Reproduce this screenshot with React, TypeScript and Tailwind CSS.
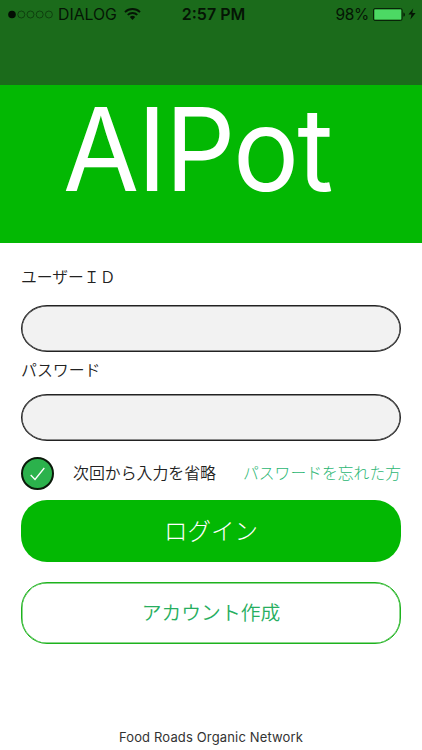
import { useState } from "react";

const SignalDots = () => {
  return (
    <svg width="46" height="9" viewBox="0 0 46 9" fill="none">
      <circle cx="4" cy="4.5" r="3.8" fill="#030d03" />
      {[13.3, 22.5, 31.7, 40.9].map((cx) => (
        <circle key={cx} cx={cx} cy="4.5" r="3.5" stroke="#0b350b" strokeWidth="0.8" />
      ))}
    </svg>
  );
};

const WifiIcon = () => {
  return (
    <svg width="17" height="12" viewBox="0 0 17 12" fill="none">
      <path d="M1 4.1A10.8 10.8 0 0 1 16 4.1" stroke="#051505" strokeWidth="1.9" />
      <path d="M3.7 6.9A6.9 6.9 0 0 1 13.3 6.9" stroke="#051505" strokeWidth="1.9" />
      <path d="M5.8 9.1A3.9 3.9 0 0 1 11.2 9.1L8.5 12Z" fill="#051505" />
    </svg>
  );
};

const BatteryIcon = () => {
  return (
    <svg width="33" height="13" viewBox="0 0 33 13" fill="none">
      <rect x="0.5" y="0.5" width="28.6" height="12" rx="1.6" stroke="#082308" />
      <rect x="1.4" y="1.4" width="26.8" height="10.2" rx="0.6" fill="#4cd964" />
      <path d="M30.3 4.4C32.6 4.9 32.6 8.1 30.3 8.6Z" fill="#082308" />
    </svg>
  );
};

const ChargingIcon = () => {
  return (
    <svg width="8" height="12" viewBox="0 0 8 12">
      <path d="M5.2 0.4L0.4 6.6H3.5L2.4 11.6L7.6 5.1H4.3Z" fill="#051505" />
    </svg>
  );
};

const StatusBar = () => {
  return (
    <div className="grid h-7 grid-cols-[1fr_auto_1fr] items-center pr-1.5 pl-2 text-[#051505]">
      <div className="flex items-center">
        <SignalDots />
        <span className="ml-1 translate-y-px text-[15.8px] leading-7">DIALOG</span>
        <span className="ml-2 -translate-x-px">
          <WifiIcon />
        </span>
      </div>
      <span className="translate-x-[1.5px] text-[16px] leading-7 font-semibold">
        2:57 PM
      </span>
      <div className="flex items-center justify-end">
        <span className="translate-y-px text-[15.5px] leading-7 tracking-[-0.3px]">
          98%
        </span>
        <span className="ml-1">
          <BatteryIcon />
        </span>
        <span className="ml-0.5">
          <ChargingIcon />
        </span>
      </div>
    </div>
  );
};

const Field = ({
  label,
  type,
  labelClass,
}: {
  label: string;
  type: string;
  labelClass: string;
}) => {
  return (
    <label className="block">
      <span className={labelClass}>{label}</span>
      <input
        type={type}
        className="block h-[47px] w-full rounded-[26px/23.5px] border border-[#222] bg-[#f2f2f2] px-5 shadow-[inset_0_0_0_0.5px_#222] outline-none"
      />
    </label>
  );
};

export default function App() {
  const [remember, setRemember] = useState(true);

  return (
    <main className="flex h-[750px] w-[422px] flex-col overflow-hidden bg-white font-['Inter','Noto_Sans_CJK_JP',sans-serif]">
      <header className="h-[85px] bg-[#1b6b1b]">
        <StatusBar />
      </header>
      <div className="h-[158px] bg-[#03b803] pl-[63px]">
        <h1 className="origin-left scale-x-[0.96] pt-[7px] text-[115px] leading-[116px] font-normal tracking-[-2px] text-white">
          AIPot
        </h1>
      </div>
      <form
        className="flex flex-1 flex-col px-[21px] font-[350] text-[#222]"
        onSubmit={(e) => e.preventDefault()}
      >
        <Field
          label="ユーザーＩＤ"
          type="text"
          labelClass="block pt-[23px] pb-[15px] text-[15.8px] leading-6"
        />
        <Field
          label="パスワード"
          type="password"
          labelClass="block pt-[7px] pb-[11px] text-[15.9px] leading-6"
        />
        <div className="mt-4 flex h-[33px] items-center">
          <button
            type="button"
            onClick={() => setRemember(!remember)}
            className="flex h-[33px] w-[33px] items-center justify-center rounded-full border-2 border-[#0a1a0a] bg-[#2bb24c]"
          >
            {remember && (
              <svg width="15" height="14" viewBox="0 0 15 14" fill="none">
                <path d="M0.7 8L5 12.5L14.3 1" stroke="#fff" strokeWidth="1.3" />
              </svg>
            )}
          </button>
          <span className="ml-[19px] text-[15.9px] leading-6">次回から入力を省略</span>
          <a className="ml-auto text-[15.8px] leading-6 font-light text-[#2bb673]">
            パスワードを忘れた方
          </a>
        </div>
        <button
          type="submit"
          className="mt-2.5 h-[62px] rounded-[26px] bg-[#03b803] pt-0.5 text-[23.5px] font-light text-white"
        >
          ログイン
        </button>
        <button
          type="button"
          className="mt-5 h-[62px] rounded-[26px] border border-[#1db21d] bg-white pt-0.5 text-[19.8px] text-[#27ae60] shadow-[inset_0_0_0_0.5px_#1db21d]"
        >
          アカウント作成
        </button>
        <p className="mt-auto pb-1 text-center text-[13px] leading-[18px] font-normal tracking-[0.15px] text-[#333]">
          Food Roads Organic Network
        </p>
      </form>
    </main>
  );
}
